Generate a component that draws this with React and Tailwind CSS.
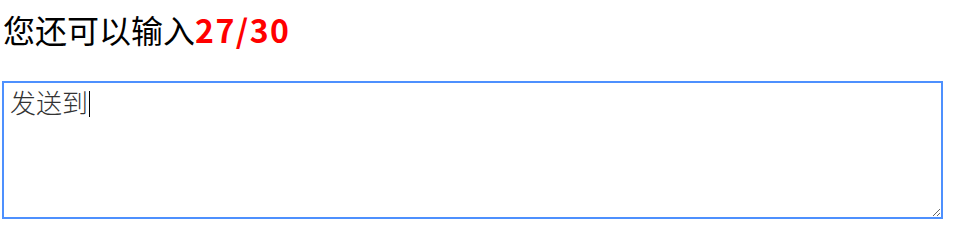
import { useEffect, useRef } from 'react'

const MAX = 30

function App() {
  const text = '发送到'
  const boxRef = useRef(null)

  useEffect(() => {
    const el = boxRef.current
    if (!el) return
    el.focus()
    el.setSelectionRange(text.length, text.length)
  }, [])

  return (
    <div className="h-[235px] w-[960px] bg-white font-['Microsoft_YaHei','Noto_Sans_CJK_SC',sans-serif] text-black">
      <div className="px-[3px] pt-[5px] text-[32px] leading-[48px]">
        您还可以输入
        <span className="font-bold tracking-[1.5px] text-[#ff0000]">
          {MAX - text.length}/{MAX}
        </span>
      </div>
      <div className="relative mt-[28px] ml-[2px] w-[941px]">
        <textarea
          ref={boxRef}
          defaultValue={text}
          className="block h-[138px] w-full border-2 border-[#4d90fe] px-[6px] pt-[2px] text-[26px] font-light leading-[34px] text-[#333] caret-black outline-none"
        />
        <span className="pointer-events-none absolute top-[10px] left-[87px] h-[26px] w-px bg-black" />
      </div>
    </div>
  )
}

export default App
